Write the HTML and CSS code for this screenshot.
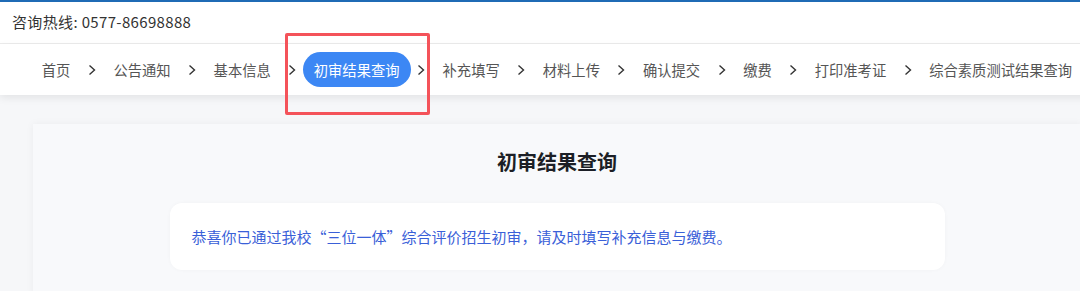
FILE: index.html
```html
<!DOCTYPE html>
<html lang="zh-CN">
<head>
    <meta charset="UTF-8">
    <title>初审结果查询</title>
    <link rel="stylesheet" href="styles.css">
</head>
<body>
    <div class="page">
        <div class="topbar">咨询热线: 0577-86698888</div>

        <nav class="steps">
            <span class="step">首页</span>
            <span class="sep"><svg viewBox="0 0 8 12"><path d="M1.5 1.5 L6.5 6 L1.5 10.5"/></svg></span>
            <span class="step">公告通知</span>
            <span class="sep"><svg viewBox="0 0 8 12"><path d="M1.5 1.5 L6.5 6 L1.5 10.5"/></svg></span>
            <span class="step">基本信息</span>
            <span class="sep"><svg viewBox="0 0 8 12"><path d="M1.5 1.5 L6.5 6 L1.5 10.5"/></svg></span>
            <span class="step active">初审结果查询</span>
            <span class="sep"><svg viewBox="0 0 8 12"><path d="M1.5 1.5 L6.5 6 L1.5 10.5"/></svg></span>
            <span class="step">补充填写</span>
            <span class="sep"><svg viewBox="0 0 8 12"><path d="M1.5 1.5 L6.5 6 L1.5 10.5"/></svg></span>
            <span class="step">材料上传</span>
            <span class="sep"><svg viewBox="0 0 8 12"><path d="M1.5 1.5 L6.5 6 L1.5 10.5"/></svg></span>
            <span class="step">确认提交</span>
            <span class="sep"><svg viewBox="0 0 8 12"><path d="M1.5 1.5 L6.5 6 L1.5 10.5"/></svg></span>
            <span class="step">缴费</span>
            <span class="sep"><svg viewBox="0 0 8 12"><path d="M1.5 1.5 L6.5 6 L1.5 10.5"/></svg></span>
            <span class="step">打印准考证</span>
            <span class="sep"><svg viewBox="0 0 8 12"><path d="M1.5 1.5 L6.5 6 L1.5 10.5"/></svg></span>
            <span class="step">综合素质测试结果查询</span>
        </nav>

        <main class="content">
            <div class="card">
                <h2 class="title">初审结果查询</h2>
                <div class="notice">恭喜你已通过我校“三位一体”综合评价招生初审，请及时填写补充信息与缴费。</div>
            </div>
        </main>

        <!-- highlight box drawn over the screenshot -->
        <div class="mark"></div>
    </div>
</body>
</html>
```

FILE: styles.css
```css
body {
    margin: 0;
    overflow: hidden;
    background: #f6f7f9;
    font-family: "Noto Sans CJK SC", "Noto Sans", sans-serif;
}
.page {
    position: relative;
    width: 1114px;
    height: 291px;
    overflow: hidden;
    border-top: 2px solid #1f6bb5;
    box-sizing: border-box;
}
.topbar {
    height: 42px;
    display: flex;
    align-items: center;
    padding-left: 12px;
    padding-bottom: 2px;
    box-sizing: border-box;
    background: #fff;
    border-bottom: 1px solid #ececec;
    font-size: 15px;
    letter-spacing: 0.35px;
    color: #333;
}
.steps {
    height: 51px;
    display: flex;
    align-items: center;
    justify-content: center;
    background: #fff;
    box-shadow: 0 3px 8px rgba(0, 0, 0, 0.08);
    position: relative;
    z-index: 1;
}
.step {
    font-size: 14.3px;
    color: #555;
    padding: 0 11px;
    line-height: 35px;
    border-radius: 18px;
    white-space: nowrap;
}
.step.active {
    background: #3c87f4;
    color: #fff;
}
.sep {
    width: 21px;
    display: flex;
    justify-content: center;
    align-items: center;
}
.sep svg {
    width: 8px;
    height: 12px;
    fill: none;
    stroke: #333;
    stroke-width: 1.4;
}
.content {
    padding: 29px 33px 0;
}
.card {
    height: 170px;
    background: #f8f9fb;
    box-shadow: 0 0 8px rgba(0, 0, 0, 0.05);
    padding-top: 23px;
    box-sizing: border-box;
}
.title {
    margin: 0;
    text-align: center;
    font-size: 20px;
    font-weight: 700;
    color: #1c1f26;
    line-height: 30px;
}
.notice {
    width: 775px;
    margin: 26px auto 0;
    height: 67px;
    box-sizing: border-box;
    padding: 0 22px;
    display: flex;
    align-items: center;
    background: #fff;
    border-radius: 12px;
    box-shadow: 0 0 4px rgba(0, 0, 0, 0.03);
    font-size: 15px;
    color: #3a60d8;
}
.mark {
    position: absolute;
    left: 285px;
    top: 31px;
    width: 145px;
    height: 82px;
    border: 3px solid #f4535a;
    border-radius: 2px;
    box-sizing: border-box;
    z-index: 2;
}
```
